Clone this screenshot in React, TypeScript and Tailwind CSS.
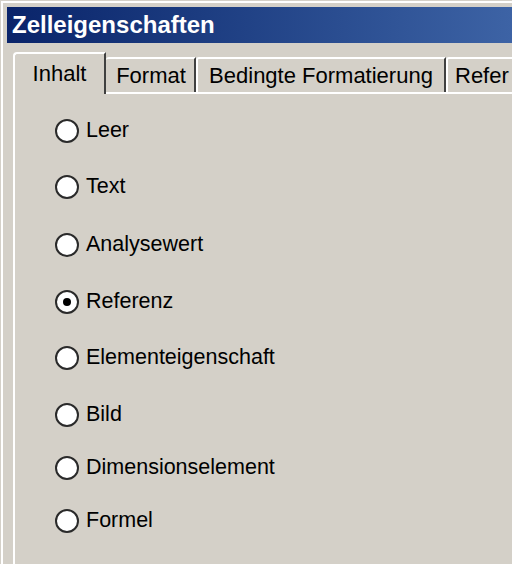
import React from "react";

const items = [
  { label: "Leer", checked: false, cls: "mt-[25px]" },
  { label: "Text", checked: false, cls: "mt-[32px]" },
  { label: "Analysewert", checked: false, cls: "mt-[34px]" },
  { label: "Referenz", checked: true, cls: "mt-[33px]" },
  { label: "Elementeigenschaft", checked: false, cls: "mt-[32px]" },
  { label: "Bild", checked: false, cls: "mt-[33px]" },
  { label: "Dimensionselement", checked: false, cls: "mt-[29px]" },
  { label: "Formel", checked: false, cls: "mt-[29px]" },
];

function Radio({ checked }: { checked: boolean }) {
  return (
    <div className="w-[24px] h-[24px] rounded-full border-2 border-[#2a2a2a] bg-white flex items-center justify-center shrink-0">
      {checked && <div className="w-[8px] h-[8px] rounded-full bg-black" />}
    </div>
  );
}

export default function App() {
  return (
    <div
      className="w-[512px] h-[564px] bg-[#d4d0c8] overflow-hidden pl-px pt-px"
      style={{ fontFamily: '"Liberation Sans", Arial, sans-serif' }}
    >
      <div className="h-full border-l-2 border-t-2 border-white flex flex-col">
        <div className="ml-[4px] mt-[4px] h-[36px] flex items-center pl-[5px] bg-gradient-to-r from-[#0a246a] to-[#3d63a5]">
          <span className="text-white font-bold text-[24px] leading-none">Zelleigenschaften</span>
        </div>
        <div className="ml-[10px] mt-[9px] flex flex-col flex-1">
          <div className="flex items-end h-[40px]">
            <div className="relative z-10 -mb-[2px] w-[93px] h-[42px] bg-[#d4d0c8] border-l-2 border-t-2 border-white border-r-2 border-r-[#404040] rounded-tl-[4px] flex items-center justify-center text-[22px] text-black pb-[2px]">
              Inhalt
            </div>
            <div className="w-[90px] h-[35px] border-t-2 border-white border-r-2 border-r-[#404040] rounded-tl-[3px] flex items-center justify-center text-[22px] text-black pl-[2px]">
              Format
            </div>
            <div className="w-[250px] h-[35px] border-l-2 border-t-2 border-white border-r-2 border-r-[#404040] rounded-tl-[3px] flex items-center justify-center text-[22px] text-black">
              Bedingte Formatierung
            </div>
            <div className="flex-1 h-[35px] border-l-2 border-t-2 border-white rounded-tl-[3px] flex items-center pl-[7px] text-[22px] text-black whitespace-nowrap overflow-hidden">
              Refer
            </div>
          </div>
          <div className="flex-1 border-l-2 border-t-2 border-white pl-[40px] flex flex-col">
            {items.map((it) => (
              <div key={it.label} className={"h-[24px] flex items-center gap-[7px] " + it.cls}>
                <Radio checked={it.checked} />
                <span className="text-[21.5px] text-black leading-none whitespace-nowrap">{it.label}</span>
              </div>
            ))}
          </div>
        </div>
      </div>
    </div>
  );
}
